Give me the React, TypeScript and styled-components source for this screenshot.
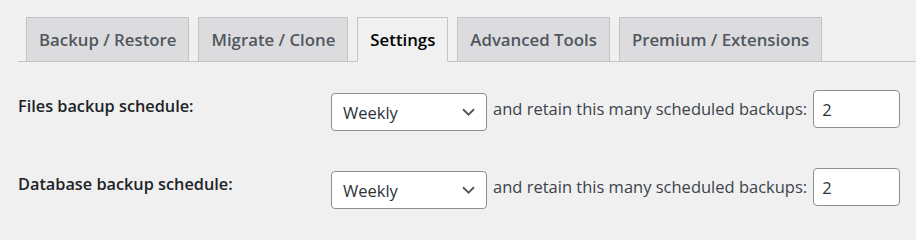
import React from "react";
import styled, { createGlobalStyle } from "styled-components";

const Global = createGlobalStyle`
  html, body { margin: 0; padding: 0; }
  body {
    background: #f0f0f1;
    font-family: "Open Sans", "Noto Sans", "Liberation Sans", sans-serif;
    color: #3c434a;
    width: 916px;
    height: 224px;
    overflow: hidden;
  }
`;

const Page = styled.div`
  padding-left: 18px;
`;

const TabBar = styled.nav`
  display: flex;
  gap: 9px;
  padding: 17px 0 0 8px;
  border-bottom: 1px solid #c3c4c7;
`;

const Tab = styled.a<{ $active?: boolean }>`
  display: block;
  height: 43px;
  line-height: 43px;
  padding: 0 12px;
  margin-bottom: -1px;
  border: 1px solid #c3c4c7;
  border-bottom-color: ${(p) => (p.$active ? "#f0f0f1" : "#c3c4c7")};
  background: ${(p) => (p.$active ? "#f0f0f1" : "#dcdcde")};
  color: ${(p) => (p.$active ? "#000" : "#50575e")};
  font-size: 16.8px;
  font-weight: 600;
  text-decoration: none;
  white-space: nowrap;
`;

const Form = styled.div`
  display: flex;
  flex-direction: column;
  gap: 40px;
  padding-top: 28px;
`;

const Row = styled.div`
  display: grid;
  grid-template-columns: 313px 1fr;
  align-items: start;
`;

const Label = styled.label`
  padding-top: 5px;
  font-size: 16.3px;
  line-height: 22px;
  font-weight: 600;
  color: #1d2327;
`;

const Controls = styled.div`
  display: flex;
  align-items: center;
  gap: 6px;
  height: 38px;
`;

const SelectWrap = styled.div`
  position: relative;
  margin-top: 6px;
  width: 156px;
  height: 38px;
`;

const Select = styled.select`
  appearance: none;
  -webkit-appearance: none;
  box-sizing: border-box;
  width: 100%;
  height: 100%;
  padding: 0 30px 0 11px;
  border: 1px solid #8c8f94;
  border-radius: 4px;
  background: #fff;
  color: #2c3338;
  font-family: inherit;
  font-size: 16.5px;
  outline: none;
`;

const Chevron = styled.svg`
  position: absolute;
  right: 12px;
  top: 50%;
  margin-top: -4px;
  pointer-events: none;
`;

const Text = styled.span`
  font-size: 16.5px;
  line-height: 22px;
  color: #3c434a;
  white-space: nowrap;
`;

const NumberInput = styled.input`
  box-sizing: border-box;
  width: 87px;
  height: 38px;
  padding: 0 8px;
  border: 1px solid #8c8f94;
  border-radius: 4px;
  background: #fff;
  color: #2c3338;
  font-family: inherit;
  font-size: 16.5px;
  outline: none;
  -moz-appearance: textfield;
  &::-webkit-outer-spin-button,
  &::-webkit-inner-spin-button {
    -webkit-appearance: none;
    margin: 0;
  }
`;

const tabs = [
  "Backup / Restore",
  "Migrate / Clone",
  "Settings",
  "Advanced Tools",
  "Premium / Extensions",
];

function ScheduleRow({ label }: { label: string }) {
  return (
    <Row>
      <Label>{label}</Label>
      <Controls>
        <SelectWrap>
          <Select defaultValue="weekly">
            <option value="manual">Manual</option>
            <option value="daily">Daily</option>
            <option value="weekly">Weekly</option>
            <option value="monthly">Monthly</option>
          </Select>
          <Chevron width="13" height="8" viewBox="0 0 13 8">
            <path d="M1 1.3 L6.5 6.6 L12 1.3" fill="none" stroke="#50575e" strokeWidth="1.9" />
          </Chevron>
        </SelectWrap>
        <Text>and retain this many scheduled backups:</Text>
        <NumberInput type="number" defaultValue={2} />
      </Controls>
    </Row>
  );
}

export default function App() {
  return (
    <>
      <Global />
      <Page>
        <TabBar>
          {tabs.map((t) => (
            <Tab key={t} $active={t === "Settings"}>
              {t}
            </Tab>
          ))}
        </TabBar>
        <Form>
          <ScheduleRow label="Files backup schedule:" />
          <ScheduleRow label="Database backup schedule:" />
        </Form>
      </Page>
    </>
  );
}
